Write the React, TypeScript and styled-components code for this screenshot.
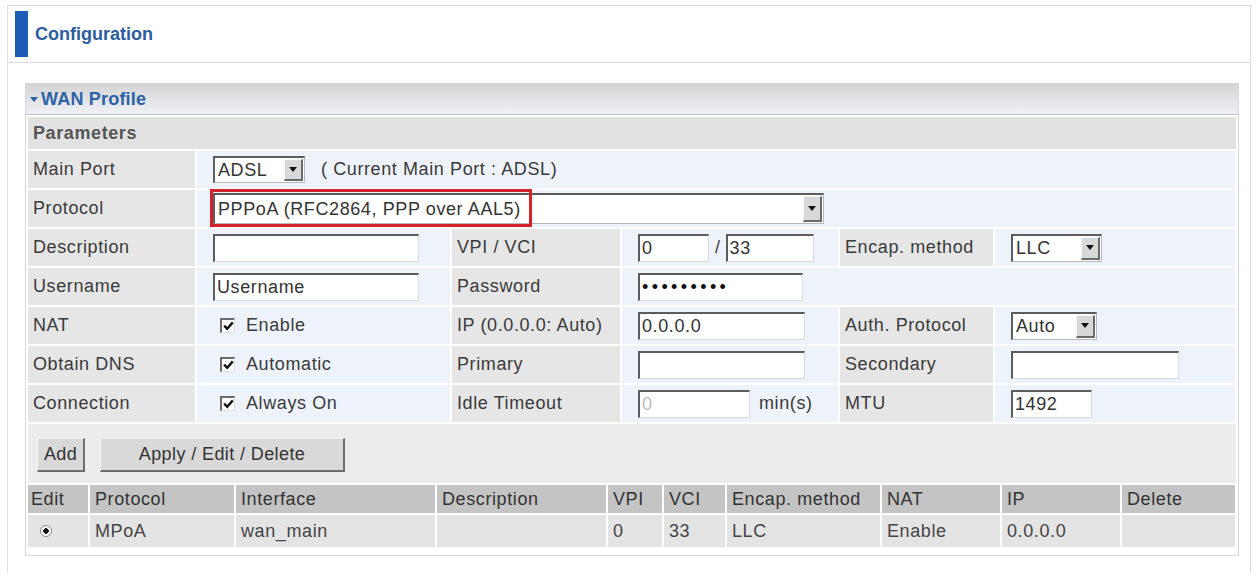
import React from 'react';
import styled, { createGlobalStyle } from 'styled-components';

const GlobalStyle = createGlobalStyle`
  body {
    margin: 0;
    background: #fff;
    font-family: "Liberation Sans", Arial, sans-serif;
    font-size: 18px;
    letter-spacing: 0.6px;
    color: #3a3a3a;
  }
`

const Page = styled.div`
  box-sizing: border-box;
  height: 568px;
  margin: 5px 5px 0 7px;
  border: 1px solid #dedede;
  border-bottom: none;
`

const TitleBar = styled.div`
  display: flex;
  align-items: center;
  gap: 7px;
  height: 56px;
  padding-left: 7px;
  border-bottom: 1px solid #dadada;
`

const TitleMark = styled.div`
  width: 13px;
  height: 46px;
  background: #1a5cb6;
`

const Title = styled.h1`
  margin: 0;
  font-size: 18px;
  font-weight: bold;
  letter-spacing: 0;
  color: #2b5d9f;
`

const Panel = styled.section`
  margin: 20px 11px 0 17px;
  padding: 0 2px 8px;
  border: 1px solid #d4d6da;
`

const PanelHead = styled.div`
  display: flex;
  align-items: center;
  gap: 3px;
  height: 30px;
  margin: 0 -2px;
  padding-left: 4px;
  background: linear-gradient(#d4d4d4, #eff1f6);
  border-bottom: 1px solid #b9c3d3;
  font-size: 18px;
  font-weight: bold;
  letter-spacing: 0.2px;
  color: #2e62a6;
`

const SectionTitle = styled.div`
  display: flex;
  align-items: center;
  height: 32px;
  margin-top: 2px;
  padding-left: 5px;
  background: #e2e2e2;
  font-weight: bold;
  color: #555;
`

const FormGrid = styled.div`
  display: grid;
  grid-template-columns: 167px 253px 168px 216px 153px 240px;
  grid-auto-rows: 37px;
  gap: 2px;
  margin-top: 2px;
`

const Label = styled.div`
  display: flex;
  align-items: center;
  padding-left: 5px;
  background: #e6e6e6;
  white-space: nowrap;
`

const Value = styled.div<{ $span?: number }>`
  display: flex;
  align-items: center;
  padding-left: 16px;
  background: #eef3fb;
  white-space: nowrap;
  grid-column: span ${p => p.$span ?? 1};
`

const TextInput = styled.input<{ $w: number }>`
  box-sizing: border-box;
  width: ${p => p.$w}px;
  height: 28px;
  padding: 0 2px;
  border-style: solid;
  border-width: 2px 1px 1px 2px;
  border-color: #5c5c5c #dadada #dadada #5c5c5c;
  background: #fff;
  font: 18px "Liberation Sans", Arial, sans-serif;
  letter-spacing: 0.6px;
  color: #333;
  outline: none;

  &[type="password"] {
    letter-spacing: 3.4px;
    color: #111;
  }

  &:disabled {
    color: #bdbdbd;
    background: #fff;
  }
`

const SelectBox = styled.div<{ $w: number; $h?: number }>`
  box-sizing: border-box;
  display: flex;
  width: ${p => p.$w}px;
  height: ${p => p.$h ?? 28}px;
  border-style: solid;
  border-width: 2px 1px 1px 2px;
  border-color: #5c5c5c #b8b8b8 #b8b8b8 #5c5c5c;
  background: #fff;
`

const SelectText = styled.span`
  flex: 1;
  display: flex;
  align-items: center;
  padding-left: 3px;
  color: #333;
`

const SelectArrow = styled.span`
  box-sizing: border-box;
  width: 19px;
  margin: 1px;
  display: flex;
  align-items: center;
  justify-content: center;
  background: #d8d8d8;
  border-style: solid;
  border-width: 1px 2px 2px 1px;
  border-color: #f5f5f5 #6a6a6a #6a6a6a #f5f5f5;
`

const Hint = styled.span`
  margin-left: 16px;
`

const Slash = styled.span`
  margin: 0 5px 0 6px;
`

const Unit = styled.span`
  margin-left: 9px;
`

const Marked = styled.div`
  position: relative;
`

const Highlight = styled.span`
  position: absolute;
  left: -3px;
  top: -4px;
  width: 322px;
  height: 38px;
  box-sizing: border-box;
  border: 3px solid #d2222b;
  pointer-events: none;
`

const CheckBox = styled.span`
  box-sizing: border-box;
  display: flex;
  align-items: center;
  justify-content: center;
  width: 15px;
  height: 15px;
  margin: 0 11px 0 7px;
  border-style: solid;
  border-width: 2px 1px 1px 2px;
  border-color: #6b6b6b #dedede #dedede #6b6b6b;
  background: #fff;
`

const ButtonBar = styled.div`
  display: flex;
  align-items: flex-start;
  gap: 15px;
  height: 59px;
  box-sizing: border-box;
  margin-top: 2px;
  padding: 14px 0 0 9px;
  background: #ececec;
`

const Button = styled.button<{ $w: number }>`
  width: ${p => p.$w}px;
  height: 34px;
  padding: 0;
  background: #d9d9d9;
  border-style: solid;
  border-width: 1px 2px 2px 1px;
  border-color: #f6f6f6 #6d6d6d #6d6d6d #f6f6f6;
  font: 18px "Liberation Sans", Arial, sans-serif;
  letter-spacing: 0.4px;
  color: #333;
`

const ListGrid = styled.div`
  display: grid;
  grid-template-columns: 60px 144px 199px 169px 54px 61px 153px 118px 118px 113px;
  gap: 2px;
  margin-top: 2px;
`

const HeadCell = styled.div<{ $pad?: number }>`
  display: flex;
  align-items: center;
  height: 28px;
  padding-left: ${p => p.$pad ?? 5}px;
  background: #c4c4c4;
  color: #333;
  white-space: nowrap;
`

const BodyCell = styled.div`
  display: flex;
  align-items: center;
  height: 32px;
  padding-left: 5px;
  background: #e4e4e4;
  color: #444;
  white-space: nowrap;
`

const Radio = styled.span`
  box-sizing: border-box;
  width: 12px;
  height: 12px;
  margin-left: 7px;
  border-radius: 50%;
  border: 1px solid #8a8a8a;
  background: radial-gradient(circle, #111 0 2.5px, #fff 3px);
`

function Select({ value, w, h }: { value: string; w: number; h?: number }) {
  return (
    <SelectBox $w={w} $h={h}>
      <SelectText>{value}</SelectText>
      <SelectArrow>
        <svg width="8" height="5" viewBox="0 0 8 5">
          <path d="M0 0 H8 L4 5 Z" fill="#111" />
        </svg>
      </SelectArrow>
    </SelectBox>
  )
}

function Check({ label }: { label: string }) {
  return (
    <>
      <CheckBox>
        <svg width="11" height="10" viewBox="0 0 11 10">
          <path d="M1.2 4.6 L4.2 7.8 L9.8 1.4" stroke="#111" strokeWidth="2.4" fill="none" />
        </svg>
      </CheckBox>
      {label}
    </>
  )
}

const headers = ['Protocol', 'Interface', 'Description', 'VPI', 'VCI', 'Encap. method', 'NAT', 'IP', 'Delete']
const entry = ['MPoA', 'wan_main', '', '0', '33', 'LLC', 'Enable', '0.0.0.0', '']

export default function App() {
  return (
    <>
      <GlobalStyle />
      <Page>
        <TitleBar>
          <TitleMark />
          <Title>Configuration</Title>
        </TitleBar>

        <Panel>
          <PanelHead>
            <svg width="8" height="5" viewBox="0 0 8 5">
              <path d="M0 0 H8 L4 5 Z" fill="#2e62a6" />
            </svg>
            WAN Profile
          </PanelHead>
          <SectionTitle>Parameters</SectionTitle>

          <FormGrid>
            <Label>Main Port</Label>
            <Value $span={5}>
              <Select value="ADSL" w={92} h={27} />
              <Hint>( Current Main Port : ADSL)</Hint>
            </Value>

            <Label>Protocol</Label>
            <Value $span={5}>
              <Marked>
                <Select value="PPPoA (RFC2864, PPP over AAL5)" w={611} h={31} />
                <Highlight />
              </Marked>
            </Value>

            <Label>Description</Label>
            <Value><TextInput $w={206} defaultValue="" /></Value>
            <Label>VPI / VCI</Label>
            <Value>
              <TextInput $w={71} defaultValue="0" />
              <Slash>/</Slash>
              <TextInput $w={88} defaultValue="33" />
            </Value>
            <Label>Encap. method</Label>
            <Value><Select value="LLC" w={91} /></Value>

            <Label>Username</Label>
            <Value><TextInput $w={206} defaultValue="Username" /></Value>
            <Label>Password</Label>
            <Value $span={3}><TextInput $w={165} type="password" defaultValue="123456789" /></Value>

            <Label>NAT</Label>
            <Value><Check label="Enable" /></Value>
            <Label>IP (0.0.0.0: Auto)</Label>
            <Value><TextInput $w={167} defaultValue="0.0.0.0" /></Value>
            <Label>Auth. Protocol</Label>
            <Value><Select value="Auto" w={86} /></Value>

            <Label>Obtain DNS</Label>
            <Value><Check label="Automatic" /></Value>
            <Label>Primary</Label>
            <Value><TextInput $w={167} defaultValue="" /></Value>
            <Label>Secondary</Label>
            <Value><TextInput $w={168} defaultValue="" /></Value>

            <Label>Connection</Label>
            <Value><Check label="Always On" /></Value>
            <Label>Idle Timeout</Label>
            <Value>
              <TextInput $w={112} defaultValue="0" disabled />
              <Unit>min(s)</Unit>
            </Value>
            <Label>MTU</Label>
            <Value><TextInput $w={81} defaultValue="1492" /></Value>
          </FormGrid>

          <ButtonBar>
            <Button $w={48}>Add</Button>
            <Button $w={245}>Apply / Edit / Delete</Button>
          </ButtonBar>

          <ListGrid>
            <HeadCell $pad={3}>Edit</HeadCell>
            {headers.map(h => <HeadCell key={h}>{h}</HeadCell>)}
            <BodyCell><Radio /></BodyCell>
            {entry.map((v, i) => <BodyCell key={i}>{v}</BodyCell>)}
          </ListGrid>
        </Panel>
      </Page>
    </>
  )
}
